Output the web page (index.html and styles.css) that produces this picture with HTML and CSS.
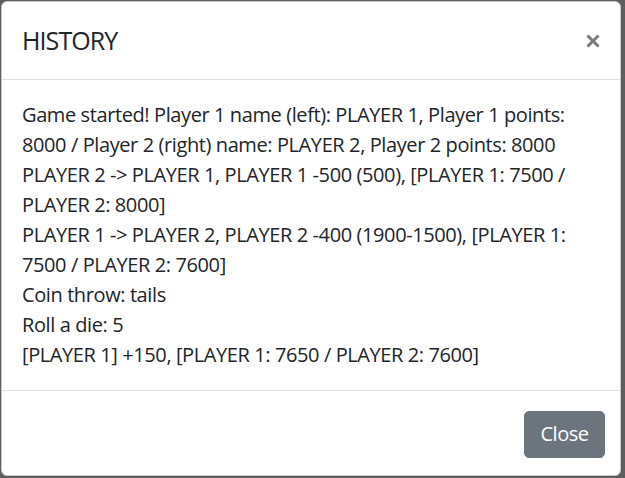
FILE: index.html
```html
<!DOCTYPE html>
<html lang="en">
<head>
<meta charset="utf-8">
<title>History</title>
<link rel="stylesheet" href="styles.css">
</head>
<body>
<div class="modal">
  <div class="modal-header">
    <h5 class="modal-title">HISTORY</h5>
    <button class="close" type="button" aria-label="Close">
      <svg width="14" height="14" viewBox="0 0 14 14"><path d="M1.5 1.5 L12.5 12.5 M12.5 1.5 L1.5 12.5" stroke="#7b7b7b" stroke-width="3" stroke-linecap="butt"/></svg>
    </button>
  </div>
  <div class="modal-body">
    <div class="entry">Game started! Player 1 name (left): PLAYER 1, Player 1 points: 8000 / Player 2 (right) name: PLAYER 2, Player 2 points: 8000</div>
    <div class="entry">PLAYER 2 -&gt; PLAYER 1, PLAYER 1 -500 (500), [PLAYER 1: 7500 / PLAYER 2: 8000]</div>
    <div class="entry">PLAYER 1 -&gt; PLAYER 2, PLAYER 2 -400 (1900-1500), [PLAYER 1: 7500 / PLAYER 2: 7600]</div>
    <div class="entry">Coin throw: tails</div>
    <div class="entry">Roll a die: 5</div>
    <div class="entry">[PLAYER 1] +150, [PLAYER 1: 7650 / PLAYER 2: 7600]</div>
  </div>
  <div class="modal-footer">
    <button class="btn-close" type="button">Close</button>
  </div>
</div>
</body>
</html>
```

FILE: styles.css
```css
html, body {
  margin: 0;
  padding: 0;
}
body {
  background: #5e5e5e;
  width: 625px;
  height: 478px;
  overflow: hidden;
  padding: 1px 0 0 1px;
  box-sizing: border-box;
  font-family: "Open Sans", "Noto Sans", sans-serif;
  color: #212529;
}
.modal {
  width: 620px;
  height: 475px;
  box-sizing: border-box;
  background: #fff;
  border: 1px solid #c9c9c9;
  border-radius: 6px;
  display: flex;
  flex-direction: column;
  overflow: hidden;
}
.modal-header {
  display: flex;
  align-items: center;
  justify-content: space-between;
  padding: 20px 20px 20px 20px;
  border-bottom: 1px solid #dee2e6;
  height: 78px;
  box-sizing: border-box;
}
.modal-title {
  margin: 0;
  font-size: 25px;
  font-weight: 400;
  line-height: 37px;
  letter-spacing: -0.9px;
}
.close {
  border: 0;
  background: none;
  padding: 0;
  margin-right: 0;
  width: 14px;
  height: 14px;
  display: flex;
}
.modal-body {
  padding: 20px 20px;
  font-size: 20px;
  line-height: 30px;
  letter-spacing: -0.4px;
  border-bottom: 1px solid #dee2e6;
}
.modal-footer {
  flex: 1;
  display: flex;
  justify-content: flex-end;
  align-items: flex-start;
  padding: 20px 15px 0 0;
}
.btn-close {
  font-family: inherit;
  font-size: 20px;
  line-height: 30px;
  letter-spacing: -0.5px;
  color: #fff;
  background: #6c757d;
  border: 1px solid #6c757d;
  border-radius: 5px;
  padding: 7px 15px 8px;
  width: 81px;
  height: 47px;
}
```
